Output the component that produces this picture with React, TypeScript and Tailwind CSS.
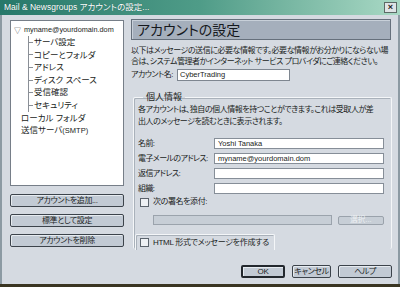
const font = "font-['Liberation_Sans','Noto_Sans_CJK_JP',sans-serif] [font-feature-settings:'palt']";

function Btn({ label, className = "" }: { label: string; className?: string }) {
  return (
    <div
      className={`flex h-[13px] items-center justify-center whitespace-nowrap rounded-[2px] border border-[#3c434b] bg-[#c2cad4] text-[8px] leading-none tracking-[-0.4px] text-[#1c1f24] shadow-[inset_1px_1px_0_#e6ebf0] ${className}`}
    >
      {label}
    </div>
  );
}

function Field({ label, value }: { label: string; value?: string }) {
  return (
    <div className="flex h-[11px] items-center">
      <span className="w-[76px] whitespace-nowrap text-[8px] leading-none tracking-[-0.6px]">{label}</span>
      <div className="flex h-[11px] w-[170px] items-center border border-[#868e98] bg-white pl-[3px] text-[7.5px] leading-none">
        {value}
      </div>
    </div>
  );
}

function Check() {
  return <div className="h-[9px] w-[9px] shrink-0 border border-[#5b636c] bg-[#eef1f4]" />;
}

export default function App() {
  const tree = ["サーバ設定", "コピーとフォルダ", "アドレス", "ディスク スペース", "受信確認", "セキュリティ"];

  return (
    <div className={`flex h-[287px] w-[400px] flex-col overflow-hidden border-b-[3px] border-b-[#3a3522] bg-[#d5dae1] text-[#1a1d22] ${font}`}>
      {/* title bar */}
      <div className="flex h-[15px] shrink-0 items-center justify-between bg-gradient-to-r from-[#26786a] via-[#4f9c88] to-[#a9d9c5] pl-[4px] pr-[3px]">
        <span className="text-[8.5px] leading-none text-white [text-shadow:0_0_1px_#1e5c52]">
          Mail &amp; Newsgroups アカウントの設定...
        </span>
        <div className="flex h-[11px] w-[13px] items-center justify-center border border-[#5c6a66] bg-[#dfe4e6] text-[9px] font-bold leading-none text-[#222]">
          ×
        </div>
      </div>

      <div className="flex flex-1 border-x-[2px] border-x-[#8c9aa3]">
        {/* left column */}
        <div className="ml-[8px] mt-[5px] flex w-[114px] flex-col">
          <div className="h-[166px] border border-[#767e88] bg-white pt-[3px] text-[8.5px] leading-none">
            <div className="flex h-[12px] items-center pl-[3px]">
              <span className="mr-[3px] text-[7px] text-[#333]">▽</span>
              <span className="text-[7.3px]">myname@yourdomain.dom</span>
            </div>
            <div className="ml-[17px] border-l border-[#8a8f96]">
              {tree.map((t) => (
                <div key={t} className="flex h-[12.6px] items-center">
                  <span className="mr-[1px] h-px w-[4px] bg-[#8a8f96]" />
                  <span>{t}</span>
                </div>
              ))}
            </div>
            <div className="flex h-[12.5px] items-center pl-[10px]">ローカル フォルダ</div>
            <div className="flex h-[12.5px] items-center pl-[10px]">
              送信サーバ<span className="text-[7.5px]">(SMTP)</span>
            </div>
          </div>
          <div className="mt-[8px] flex flex-col gap-[7px]">
            <Btn label="アカウントを追加..." />
            <Btn label="標準として設定" />
            <Btn label="アカウントを削除" />
          </div>
        </div>

        {/* right column */}
        <div className="ml-[7px] mt-[4px] flex w-[263px] flex-col">
          <div className="flex h-[21px] w-[260px] items-center border border-[#66707c] bg-[#a5afbc] pl-[5px] text-[14px] leading-none text-[#15181c] shadow-[inset_1px_1px_0_#c8d0d9]">
            アカウントの設定
          </div>
          <p className="mt-[5px] whitespace-nowrap text-[8px] leading-[11px] tracking-[-0.45px]">
            以下はメッセージの送信に必要な情報です。必要な情報がお分かりにならない場
            <br />
            合は、システム管理者かインターネット サービス プロバイダにご連絡ください。
          </p>
          <div className="mt-[2px] flex h-[12px] items-center">
            <span className="w-[46px] whitespace-nowrap text-[8px] leading-none tracking-[-0.5px]">アカウント名:</span>
            <div className="flex h-[12px] w-[113px] items-center border border-[#7e8690] bg-white pl-[2px] text-[7.5px] leading-none">
              CyberTrading
            </div>
          </div>

          <fieldset className="ml-[2px] mt-[12px] h-[156px] w-[259px] rounded-[2px] border border-b-0 border-[#f4f6f8] pl-[4px] pr-[7px] shadow-[inset_1px_1px_0_#a9b1ba]">
            <legend className="ml-[5px] px-[3px] text-[9px] leading-none">個人情報</legend>
            <p className="mt-[2px] whitespace-nowrap text-[8px] leading-[11.5px] tracking-[-0.45px]">
              各アカウントは、独自の個人情報を持つことができます。これは受取人が差
              <br />
              出人のメッセージを読むときに表示されます。
            </p>
            <div className="mt-[11px] flex flex-col gap-[4px]">
              <Field label="名前:" value="Yoshi Tanaka" />
              <Field label="電子メールのアドレス:" value="myname@yourdomain.dom" />
              <Field label="返信アドレス:" />
              <Field label="組織:" />
            </div>
            <div className="mt-[3px] flex h-[10px] items-center gap-[4px] pl-[2px]">
              <Check />
              <span className="whitespace-nowrap text-[8px] leading-none tracking-[-0.4px]">次の署名を添付:</span>
            </div>
            <div className="mt-[8px] flex items-center">
              <div className="ml-[15px] h-[10px] w-[179px] border border-[#9ba3ac] bg-[#c7ced6]" />
              <div className="ml-[6px] flex h-[9px] w-[46px] items-center justify-center rounded-[2px] border border-[#9aa2ab] bg-[#c7ced6] text-[7.5px] leading-none text-[#eef1f4]">
                選択...
              </div>
            </div>
            <div className="-ml-[3px] mt-[9px] flex h-[16px] w-[140px] items-center gap-[4px] rounded-t-[2px] border border-b-0 border-[#f4f6f8] pl-[4px] shadow-[inset_1px_1px_0_#a9b1ba]">
              <Check />
              <span className="whitespace-nowrap text-[8px] leading-none tracking-[-0.3px]">HTML 形式でメッセージを作成する</span>
            </div>
          </fieldset>

          <div className="mt-[16px] flex justify-end gap-[7px] pr-[2px]">
            <Btn label="OK" className="w-[44px] border-[2px] border-[#22272d]" />
            <Btn label="キャンセル" className="w-[39px]" />
            <Btn label="ヘルプ" className="w-[54px]" />
          </div>
        </div>
      </div>
    </div>
  );
}
